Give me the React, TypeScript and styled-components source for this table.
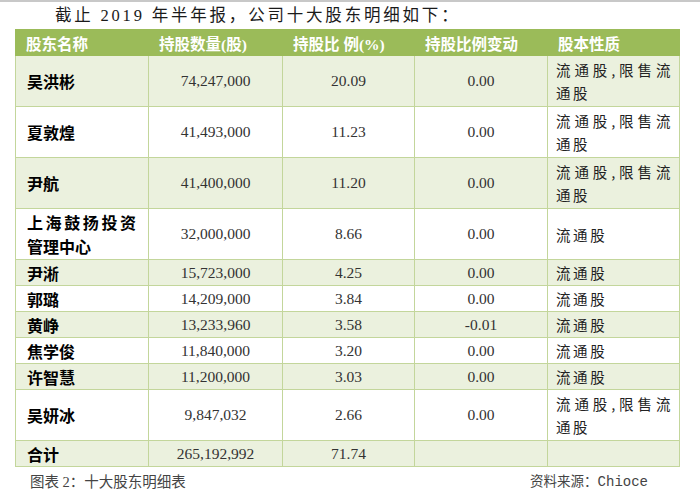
import React from "react";
import styled, { createGlobalStyle } from "styled-components";

const GlobalStyle = createGlobalStyle`
  html, body { margin: 0; padding: 0; background: #ffffff; }
  body { width: 700px; height: 496px; overflow: hidden; }
`;

const Page = styled.div`
  width: 700px;
  height: 496px;
  box-sizing: border-box;
  border-top: 2px solid #c8c8c8;
  font-family: "Liberation Serif", "Noto Sans CJK SC", serif;
  color: #222;
`;

const Title = styled.p`
  margin: 0;
  height: 27px;
  box-sizing: border-box;
  padding: 3px 0 0 55px;
  font-size: 16.5px;
  line-height: 22px;
  letter-spacing: 2.8px;
  color: #1a1a1a;
`;

const Table = styled.table`
  margin-left: 15px;
  width: 664px;
  border-collapse: collapse;
  table-layout: fixed;
  border: 1px solid #c3d69b;
`;

const HeadCell = styled.th`
  height: 25px;
  padding: 0 0 0 10px;
  text-align: left;
  background: #9bbb59;
  color: #ffffff;
  font-weight: 700;
  font-size: 15.5px;
  border: 1px solid #9bbb59;
  white-space: nowrap;
`;

const Row = styled.tr<{ $shade: boolean }>`
  background: ${(p) => (p.$shade ? "#ebf1de" : "#ffffff")};
`;

const Cell = styled.td<{ $tall: boolean }>`
  height: ${(p) => (p.$tall ? 50 : 25)}px;
  padding: 0;
  border: 1px solid #c3d69b;
  vertical-align: middle;
`;

const NameCell = styled(Cell)`
  padding: 0 12px 0 11px;
  font-family: "Noto Sans CJK SC", sans-serif;
  font-weight: 700;
  font-size: 16px;
  line-height: 24px;
  color: #000;
  text-align: justify;
`;

const NumCell = styled(Cell)`
  text-align: center;
  font-size: 15.5px;
  color: #333;
`;

const KindCell = styled(Cell)`
  padding: 0 6px 0 8px;
  font-family: "Noto Sans CJK SC", sans-serif;
  font-size: 14.5px;
  letter-spacing: 2.6px;
  line-height: 23px;
  color: #222;
  text-align: justify;
`;

const Footer = styled.div`
  display: flex;
  justify-content: space-between;
  align-items: center;
  height: 26px;
  padding: 0 52px 0 30px;
  color: #444;
`;

const Caption = styled.span`
  font-size: 14.5px;
`;

const Source = styled.span`
  font-family: "Noto Sans CJK SC", sans-serif;
  font-size: 13.5px;
`;

const Mono = styled.span`
  font-family: "Liberation Mono", monospace;
  font-size: 14px;
`;

type Holder = {
  name: string;
  qty: string;
  pct: string;
  change: string;
  kind: string;
  tall: boolean;
};

const BOTH = "流通股,限售流通股";
const FLOW = "流通股";

const rows: Holder[] = [
  { name: "吴洪彬", qty: "74,247,000", pct: "20.09", change: "0.00", kind: BOTH, tall: true },
  { name: "夏敦煌", qty: "41,493,000", pct: "11.23", change: "0.00", kind: BOTH, tall: true },
  { name: "尹航", qty: "41,400,000", pct: "11.20", change: "0.00", kind: BOTH, tall: true },
  { name: "上海鼓扬投资管理中心", qty: "32,000,000", pct: "8.66", change: "0.00", kind: FLOW, tall: true },
  { name: "尹淅", qty: "15,723,000", pct: "4.25", change: "0.00", kind: FLOW, tall: false },
  { name: "郭璐", qty: "14,209,000", pct: "3.84", change: "0.00", kind: FLOW, tall: false },
  { name: "黄峥", qty: "13,233,960", pct: "3.58", change: "-0.01", kind: FLOW, tall: false },
  { name: "焦学俊", qty: "11,840,000", pct: "3.20", change: "0.00", kind: FLOW, tall: false },
  { name: "许智慧", qty: "11,200,000", pct: "3.03", change: "0.00", kind: FLOW, tall: false },
  { name: "吴妍冰", qty: "9,847,032", pct: "2.66", change: "0.00", kind: BOTH, tall: true },
  { name: "合计", qty: "265,192,992", pct: "71.74", change: "", kind: "", tall: false },
];

export default function App() {
  return (
    <>
      <GlobalStyle />
      <Page>
        <Title>截止 2019 年半年报，公司十大股东明细如下：</Title>
        <Table>
          <colgroup>
            <col style={{ width: 133 }} />
            <col style={{ width: 134 }} />
            <col style={{ width: 132 }} />
            <col style={{ width: 133 }} />
            <col style={{ width: 132 }} />
          </colgroup>
          <thead>
            <tr>
              <HeadCell>股东名称</HeadCell>
              <HeadCell>持股数量(股)</HeadCell>
              <HeadCell>持股比 例(%)</HeadCell>
              <HeadCell>持股比例变动</HeadCell>
              <HeadCell>股本性质</HeadCell>
            </tr>
          </thead>
          <tbody>
            {rows.map((r, i) => (
              <Row key={r.name} $shade={i % 2 === 0}>
                <NameCell $tall={r.tall}>{r.name}</NameCell>
                <NumCell $tall={r.tall}>{r.qty}</NumCell>
                <NumCell $tall={r.tall}>{r.pct}</NumCell>
                <NumCell $tall={r.tall}>{r.change}</NumCell>
                <KindCell $tall={r.tall}>{r.kind}</KindCell>
              </Row>
            ))}
          </tbody>
        </Table>
        <Footer>
          <Caption>图表 2：十大股东明细表</Caption>
          <Source>
            资料来源：<Mono>Chioce</Mono>
          </Source>
        </Footer>
      </Page>
    </>
  );
}
